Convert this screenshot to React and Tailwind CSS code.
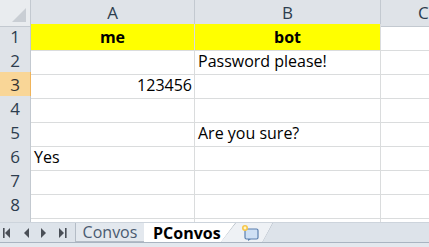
import React from 'react';

const rows = [
  { n: 1, a: 'me', b: 'bot', head: true },
  { n: 2, a: '', b: 'Password please!' },
  { n: 3, a: '123456', b: '', num: true, active: true },
  { n: 4, a: '', b: '' },
  { n: 5, a: '', b: 'Are you sure?' },
  { n: 6, a: 'Yes', b: '' },
  { n: 7, a: '', b: '' },
  { n: 8, a: '', b: '' },
  { n: 9, a: '', b: '' },
];

function NavArrows() {
  return (
    <svg width="75" height="20" viewBox="0 0 75 20" className="shrink-0">
      <g fill="#4a4f57">
        <rect x="3" y="5" width="1.6" height="10" />
        <path d="M10 5 L5 10 L10 15 Z" />
        <path d="M29 5 L24 10 L29 15 Z" />
        <path d="M41 5 L46 10 L41 15 Z" />
        <path d="M59 5 L64 10 L59 15 Z" />
        <rect x="65" y="5" width="1.6" height="10" />
      </g>
    </svg>
  );
}

function InsertIcon() {
  return (
    <svg width="20" height="18" viewBox="0 0 20 18">
      <rect x="5" y="5" width="13" height="10" rx="1.5" fill="#cfe0f4" stroke="#5a7fae" strokeWidth="1.2" />
      <path d="M8 15 L8 17 L11 15" fill="#5a7fae" />
      <circle cx="5" cy="4" r="3" fill="#f7c64a" />
      <circle cx="5" cy="4" r="1.4" fill="#fff6c8" />
    </svg>
  );
}

export default function App() {
  return (
    <div className="w-[429px] h-[247px] overflow-hidden bg-white flex flex-col" style={{ fontFamily: '"Open Sans", "Noto Sans", sans-serif' }}>
      <div className="h-[222px] overflow-hidden">
        <div className="grid grid-cols-[31px_164px_186px_48px] h-6">
          <div className="relative bg-[#e9ecef] border-r border-b border-[#c3c9d0]">
            <div className="absolute right-1 bottom-1 w-0 h-0 border-l-[14px] border-l-transparent border-b-[14px] border-b-[#c9ced4]" />
          </div>
          <div className="bg-[#dfe3e8] border-r border-b border-[#c3c9d0] flex items-center justify-center text-[17px] text-[#2d3d4e]">A</div>
          <div className="bg-[#dfe3e8] border-r border-b border-[#c3c9d0] flex items-center justify-center text-[17px] text-[#2d3d4e]">B</div>
          <div className="bg-[#dfe3e8] border-b border-[#c3c9d0] flex items-center pl-[37px] text-[17px] text-[#2d3d4e]">C</div>
        </div>
        {rows.map((r) => (
          <div key={r.n} className="grid grid-cols-[31px_164px_186px_48px] h-6">
            <div className={`flex items-center justify-center text-[17px] border-r border-b ${r.active ? 'bg-[#f9d697] border-[#f0b45a] text-[#333]' : 'bg-[#dfe3e8] border-[#c3c9d0] text-[#2d3d4e]'}`}>{r.n}</div>
            <div className={`flex items-center text-[16px] text-black border-r border-b border-[#dadcdd] ${r.head ? 'bg-[#ffff00] font-bold justify-center' : r.num ? 'justify-end pr-[2px]' : 'pl-[3px]'}`}>{r.a}</div>
            <div className={`flex items-center text-[16px] text-black border-r border-b border-[#dadcdd] ${r.head ? 'bg-[#ffff00] font-bold justify-center' : 'pl-[3px]'}`}>{r.b}</div>
            <div className="border-b border-[#dadcdd]" />
          </div>
        ))}
      </div>
      <div className="h-[20px] bg-[#dde3ea] flex items-center border-t border-[#cdd4dc]">
        <NavArrows />
        <div className="h-full w-[70px] bg-[#e3e8ee] border-l border-r border-b border-[#b4bcc6] flex items-center justify-center text-[16px] text-[#4a5a70]">Convos</div>
        <div className="relative h-full w-[92px] -ml-px bg-white [clip-path:polygon(0_0,100%_0,84%_100%,0_100%)] flex items-center pl-[9px] text-[16px] font-bold text-black">
          PConvos
          <svg className="absolute inset-0" width="92" height="20" viewBox="0 0 92 20">
            <line x1="77" y1="20" x2="92" y2="0" stroke="#9aa5b2" strokeWidth="1.2" />
          </svg>
        </div>
        <div className="relative h-full w-[52px] -ml-[15px] bg-[#eef1f5] [clip-path:polygon(29%_0,100%_0,80%_100%,0_100%)] flex items-center justify-center pl-[6px]">
          <InsertIcon />
          <svg className="absolute inset-0" width="52" height="20" viewBox="0 0 52 20">
            <line x1="41.6" y1="19.5" x2="52" y2="0" stroke="#a6b0bc" strokeWidth="1" />
            <line x1="0" y1="19.5" x2="42" y2="19.5" stroke="#a6b0bc" strokeWidth="1" />
          </svg>
        </div>
      </div>
      <div className="h-px bg-[#a9b4c1]" />
      <div className="flex-1 bg-[#e3e8ee]" />
    </div>
  );
}
